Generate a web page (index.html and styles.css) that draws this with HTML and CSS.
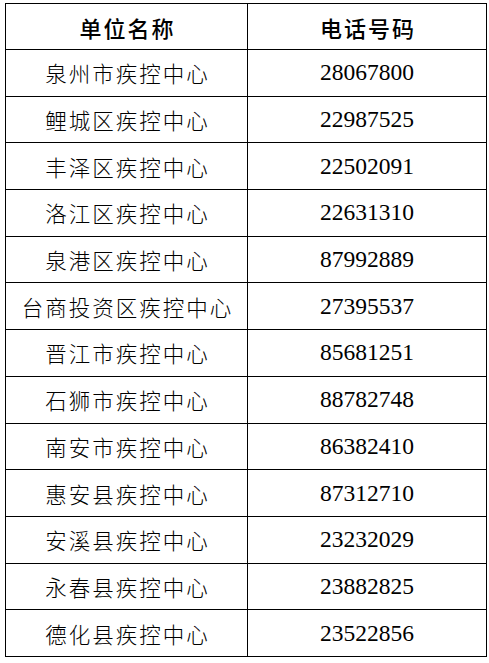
FILE: index.html
```html
<!DOCTYPE html>
<html lang="zh-CN">
<head>
<meta charset="utf-8">
<title>疾控中心电话</title>
<link rel="stylesheet" href="styles.css">
</head>
<body>
<table class="contacts">
  <colgroup>
    <col class="col-name">
    <col class="col-phone">
  </colgroup>
  <thead>
    <tr class="head-row">
      <th class="head-cell">单位名称</th>
      <th class="head-cell">电话号码</th>
    </tr>
  </thead>
  <tbody>
    <tr class="row"><td class="name">泉州市疾控中心</td><td class="phone">28067800</td></tr>
    <tr class="row"><td class="name">鲤城区疾控中心</td><td class="phone">22987525</td></tr>
    <tr class="row"><td class="name">丰泽区疾控中心</td><td class="phone">22502091</td></tr>
    <tr class="row"><td class="name">洛江区疾控中心</td><td class="phone">22631310</td></tr>
    <tr class="row"><td class="name">泉港区疾控中心</td><td class="phone">87992889</td></tr>
    <tr class="row"><td class="name">台商投资区疾控中心</td><td class="phone">27395537</td></tr>
    <tr class="row"><td class="name">晋江市疾控中心</td><td class="phone">85681251</td></tr>
    <tr class="row"><td class="name">石狮市疾控中心</td><td class="phone">88782748</td></tr>
    <tr class="row"><td class="name">南安市疾控中心</td><td class="phone">86382410</td></tr>
    <tr class="row"><td class="name">惠安县疾控中心</td><td class="phone">87312710</td></tr>
    <tr class="row"><td class="name">安溪县疾控中心</td><td class="phone">23232029</td></tr>
    <tr class="row"><td class="name">永春县疾控中心</td><td class="phone">23882825</td></tr>
    <tr class="row"><td class="name">德化县疾控中心</td><td class="phone">23522856</td></tr>
  </tbody>
</table>
</body>
</html>
```

FILE: styles.css
```css
html, body {
  margin: 0;
  padding: 0;
  background: #ffffff;
}

body {
  padding: 3px 0 0 5px;
}

.contacts {
  border-collapse: collapse;
  table-layout: fixed;
  width: 481px;
  color: #000000;
}

.col-name {
  width: 242px;
}

.col-phone {
  width: 239px;
}

.head-cell,
.name,
.phone {
  border: 1px solid #000000;
  padding: 0;
  text-align: center;
  vertical-align: middle;
}

.head-row {
  height: 46px;
}

.row {
  height: 46.7px;
}

.head-cell {
  font-family: "Noto Sans CJK SC", sans-serif;
  font-size: 22px;
  font-weight: 500;
  letter-spacing: 2px;
  text-indent: 2px;
}

.name {
  font-family: "Noto Sans CJK SC", sans-serif;
  font-size: 21.5px;
  font-weight: 300;
  letter-spacing: 2px;
  text-indent: 2px;
  white-space: nowrap;
}

.phone {
  font-family: "Liberation Serif", "Times New Roman", serif;
  font-size: 23.5px;
}
```
